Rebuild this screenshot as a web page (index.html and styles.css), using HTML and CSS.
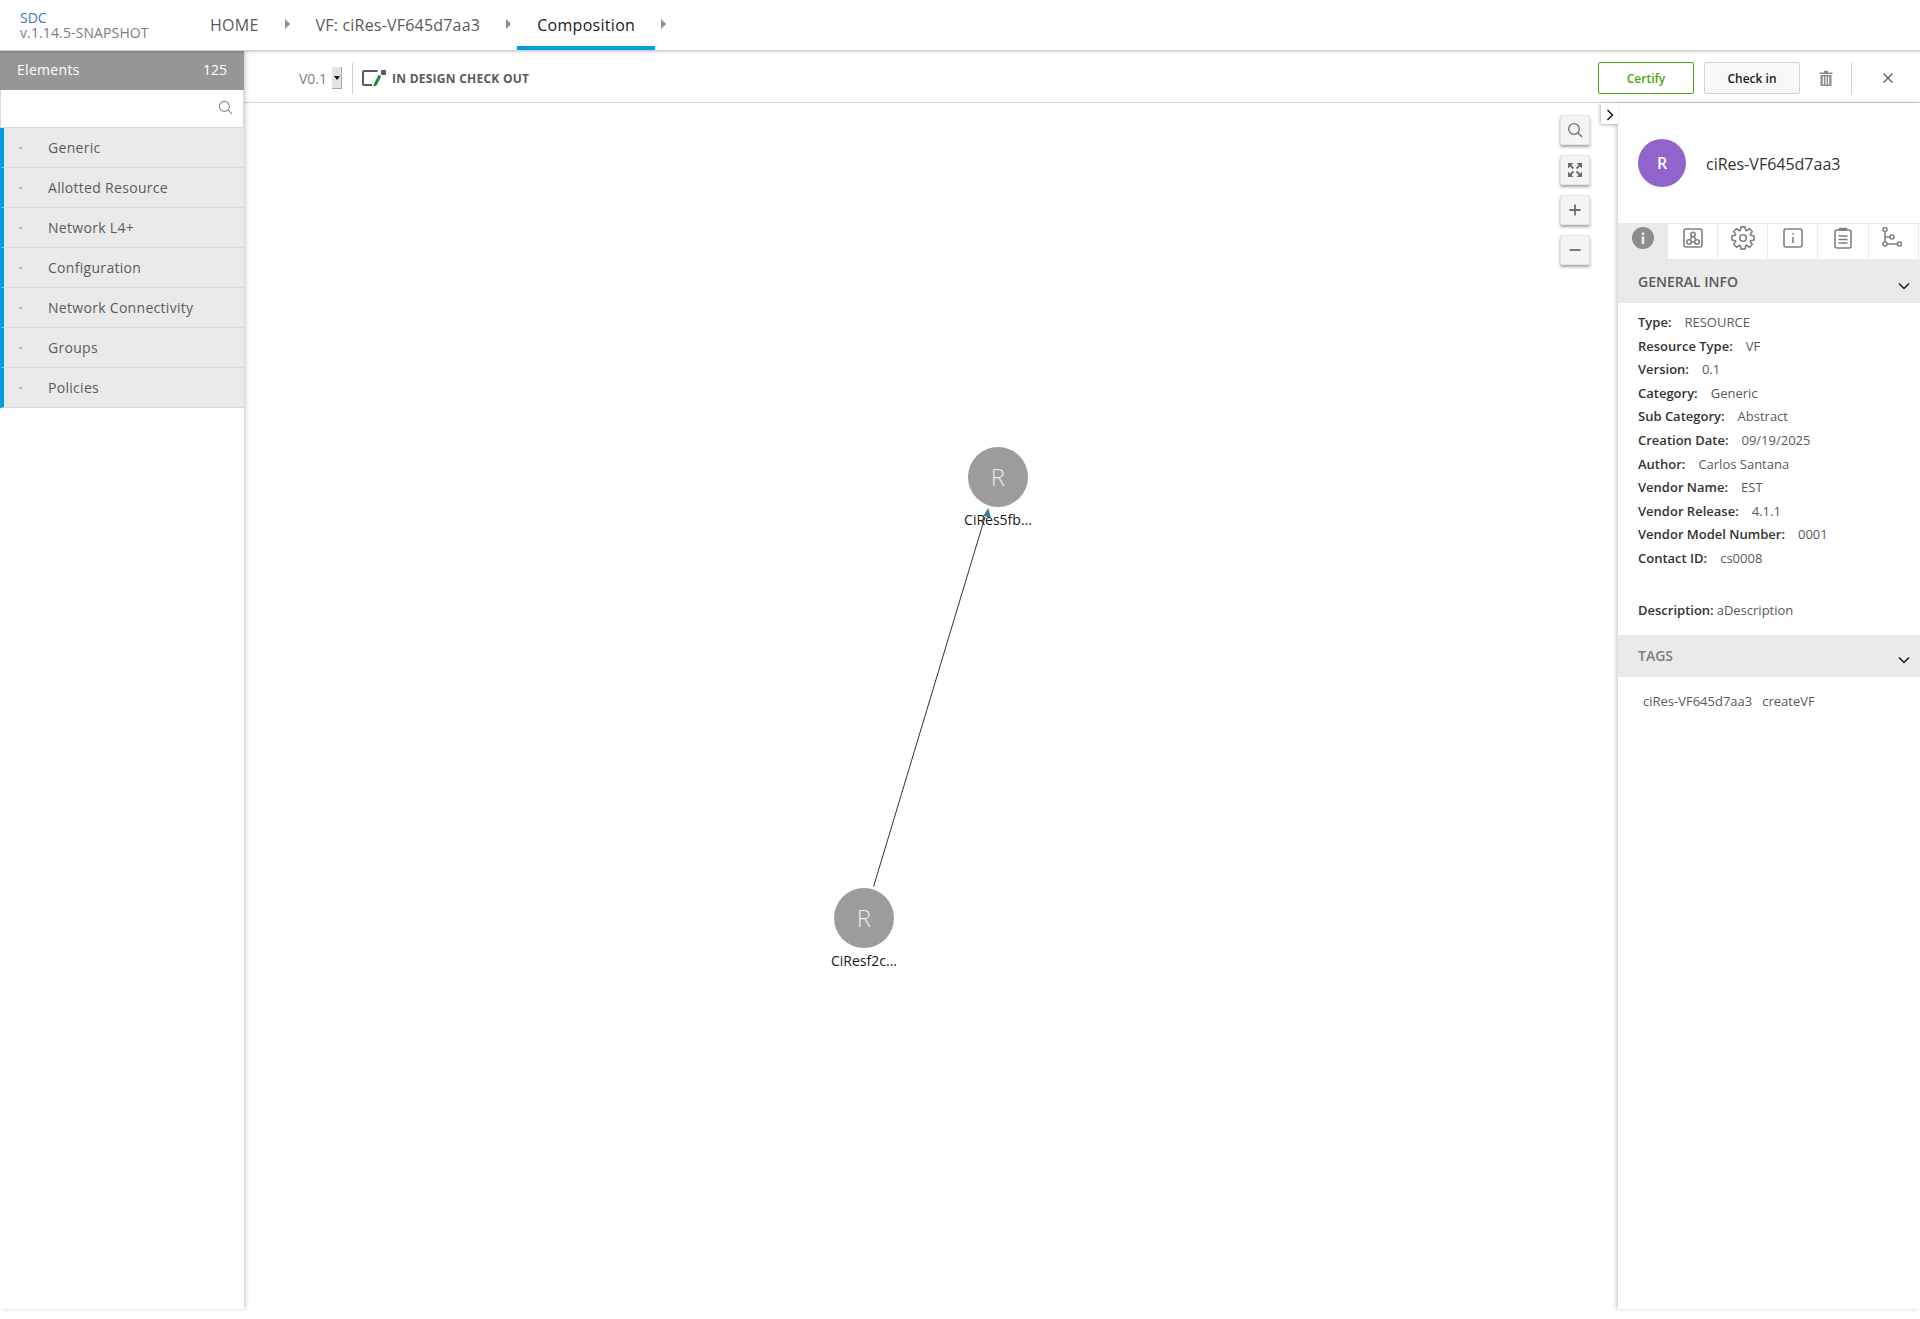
FILE: index.html
```html
<!DOCTYPE html>
<html lang="en">
<head>
<meta charset="utf-8">
<title>SDC Composition</title>
<link rel="stylesheet" href="styles.css">
</head>
<body>
<header class="topbar">
  <div class="brand"><div class="brand-name">SDC</div><div class="brand-version">v.1.14.5-SNAPSHOT</div></div>
  <nav class="crumbs">
    <a class="crumb crumb-home">HOME</a><i class="crumb-arrow"></i>
    <a class="crumb crumb-vf">VF: ciRes-VF645d7aa3</a><i class="crumb-arrow"></i>
    <a class="crumb crumb-active">Composition</a><i class="crumb-arrow"></i>
  </nav>
</header>
<div class="main">
  <aside class="palette">
    <div class="palette-head"><span class="palette-title">Elements</span><span>125</span></div>
    <div class="palette-search">
      <svg class="ico-search" viewBox="0 0 16 16"><circle cx="6.800" cy="6.800" r="5.300"/><path d="M10.800 10.800l4.200 4.200"/></svg>
    </div>
    <ul class="groups">
      <li class="group"><i class="group-chev"></i>Generic</li>
      <li class="group"><i class="group-chev"></i>Allotted Resource</li>
      <li class="group"><i class="group-chev"></i>Network L4+</li>
      <li class="group"><i class="group-chev"></i>Configuration</li>
      <li class="group"><i class="group-chev"></i>Network Connectivity</li>
      <li class="group"><i class="group-chev"></i>Groups</li>
      <li class="group"><i class="group-chev"></i>Policies</li>
    </ul>
  </aside>
  <div class="work">
    <div class="toolbar">
      <div class="version"><span>V0.1</span><span class="ver-select"><i></i></span></div>
      <div class="status">
        <svg class="ico-status" viewBox="0 0 24 16"><path class="st-box" d="M15.500 1H2a1 1 0 0 0-1 1v12a1 1 0 0 0 1 1h8"/><path class="st-pen" d="M12.500 16L18 5.500"/><rect class="st-dot" x="19" y="0" width="5" height="5" rx="1"/></svg>
        <span>IN DESIGN CHECK OUT</span>
      </div>
      <div class="actions">
        <button class="btn btn-certify">Certify</button>
        <button class="btn btn-checkin">Check in</button>
        <svg class="ico-trash" viewBox="0 0 14 16"><path d="M0.500 2.500h13v1.500h-13zM5 2.500V0.800h4v1.700z"/><path d="M1.500 5h11v10a1 1 0 0 1-1 1h-9a1 1 0 0 1-1-1zM3.700 6.500v8h1.200v-8zM6.400 6.500v8h1.200v-8zM9.100 6.500v8h1.200v-8z" fill-rule="evenodd"/></svg>
        <i class="act-div"></i>
        <svg class="ico-close" viewBox="0 0 12 12"><path d="M1.500 1.500l9 9M10.500 1.500l-9 9"/></svg>
      </div>
    </div>
    <div class="stage">
      <section class="canvas">
        <svg class="links" viewBox="0 0 1374 1206">
          <path class="link" d="M629.600 783.500L741 414"/>
          <path class="link-arrow" d="M744.300 405L746.800 414.500L739.200 413Z"/>
        </svg>
        <div class="node node-a"><div class="node-circle">R</div><div class="node-label">CiRes5fb...</div></div>
        <div class="node node-b"><div class="node-circle">R</div><div class="node-label">CiResf2c...</div></div>
        <div class="zooms">
          <button class="zoom"><svg viewBox="0 0 16 16"><circle cx="7" cy="7" r="5.300"/><path d="M11 11l4 4"/></svg></button>
          <button class="zoom"><svg viewBox="0 0 16 16"><path class="fit" d="M1 1h5.500L1 6.500zM15 1v5.500L9.500 1zM1 15v-5.500L6.500 15zM15 15H9.500L15 9.500z"/><path class="fit-line" d="M3 3l3.500 3.500M13 3L9.500 6.500M3 13l3.500-3.500M13 13L9.500 9.500"/></svg></button>
          <button class="zoom"><svg viewBox="0 0 16 16"><path class="thick" d="M8 2.500v11M2.500 8h11"/></svg></button>
          <button class="zoom"><svg viewBox="0 0 16 16"><path class="thick" d="M2.500 8h11"/></svg></button>
        </div>
      </section>
      <aside class="panel">
        <button class="panel-toggle"><svg viewBox="0 0 8 12"><path d="M1.500 1l5 5-5 5"/></svg></button>
        <div class="panel-title"><div class="avatar">R</div><div class="panel-name">ciRes-VF645d7aa3</div></div>
        <div class="tabs">
          <div class="tab tab-on"><svg class="ic-22" viewBox="0 0 22 22"><circle class="i-fill" cx="11" cy="11" r="11"/><rect class="i-knock" x="9.700" y="9.500" width="2.600" height="7.500"/><rect class="i-knock" x="9.700" y="5.500" width="2.600" height="2.600"/></svg></div>
          <div class="tab"><svg class="ic-20" viewBox="0 0 20 20"><rect x="1" y="1" width="18" height="18" rx="2"/><circle cx="10" cy="6.500" r="2.200"/><circle cx="6" cy="14" r="2.200"/><circle cx="14" cy="14" r="2.200"/><path d="M9 8.500l-2 3.500M11 8.500l2 3.500M8.200 14h3.600"/></svg></div>
          <div class="tab"><svg class="ic-24" viewBox="0 0 24 24"><circle cx="12" cy="12" r="3.300"/><path transform="translate(12 12)" d="M-2.740-7.520L-1.960-11.130L1.960-11.130L2.740-7.520L3.380-7.250L6.480-9.260L9.260-6.480L7.250-3.380L7.520-2.740L11.130-1.960L11.130 1.960L7.520 2.740L7.250 3.380L9.260 6.480L6.480 9.260L3.380 7.250L2.740 7.520L1.960 11.130L-1.960 11.130L-2.740 7.520L-3.380 7.250L-6.480 9.260L-9.260 6.480L-7.250 3.380L-7.520 2.740L-11.130 1.960L-11.130-1.960L-7.520-2.740L-7.250-3.380L-9.260-6.480L-6.480-9.260L-3.380-7.250Z"/></svg></div>
          <div class="tab"><svg class="ic-20" viewBox="0 0 20 20"><rect x="1" y="1" width="18" height="18" rx="2"/><path d="M10 9v6M10 5v1.600"/></svg></div>
          <div class="tab tab-clip"><svg class="ic-clip" viewBox="0 0 18 22"><rect x="1" y="3" width="16" height="18" rx="2"/><path d="M5.500 3V1.500h7V3zM4.500 9h9M4.500 12.500h9M4.500 16h9"/></svg></div>
          <div class="tab tab-branch"><svg class="ic-20" viewBox="0 0 20 20"><circle cx="3" cy="2.500" r="2"/><circle cx="3" cy="17" r="2"/><circle cx="10" cy="10" r="2"/><circle cx="17.500" cy="17" r="2"/><path d="M3 4.500v10.500M5 17h10.500M3 10h5"/></svg></div>
        </div>
        <div class="section-head section-general"><span>GENERAL INFO</span><svg class="chev" viewBox="0 0 12 8"><path d="M1 1.500l5 5 5-5"/></svg></div>
        <dl class="info">
          <div class="row"><dt>Type:</dt><dd>RESOURCE</dd></div>
          <div class="row"><dt>Resource Type:</dt><dd>VF</dd></div>
          <div class="row"><dt>Version:</dt><dd>0.1</dd></div>
          <div class="row"><dt>Category:</dt><dd>Generic</dd></div>
          <div class="row"><dt>Sub Category:</dt><dd>Abstract</dd></div>
          <div class="row"><dt>Creation Date:</dt><dd>09/19/2025</dd></div>
          <div class="row"><dt>Author:</dt><dd>Carlos Santana</dd></div>
          <div class="row"><dt>Vendor Name:</dt><dd>EST</dd></div>
          <div class="row"><dt>Vendor Release:</dt><dd>4.1.1</dd></div>
          <div class="row"><dt>Vendor Model Number:</dt><dd>0001</dd></div>
          <div class="row"><dt>Contact ID:</dt><dd>cs0008</dd></div>
          <div class="row row-desc"><dt>Description:</dt><dd>aDescription</dd></div>
        </dl>
        <div class="section-head section-tags"><span>TAGS</span><svg class="chev" viewBox="0 0 12 8"><path d="M1 1.500l5 5 5-5"/></svg></div>
        <div class="tags"><span>ciRes-VF645d7aa3</span><span>createVF</span></div>
      </aside>
    </div>
  </div>
</div>
</body>
</html>
```
FILE: styles.css
```css
* { box-sizing: border-box; }
html, body { margin: 0; height: 100%; }
body {
  font-family: "Open Sans", "Liberation Sans", sans-serif;
  background: #fff;
  color: #5a5a5a;
  height: 1319px;
  overflow: hidden;
  display: flex;
  flex-direction: column;
}
svg { display: block; }
button { font-family: inherit; }

.topbar {
  height: 51px;
  flex: none;
  display: flex;
  background: #fff;
  border-bottom: 1px solid #d2d2d2;
  box-shadow: 0 1px 2px rgba(0,0,0,.18);
  position: relative;
  z-index: 3;
}
.brand { width: 193px; padding: 10px 0 0 20px; font-size: 14px; line-height: 15px; }
.brand-name { color: #3b7ab5; }
.brand-version { color: #7d7d7d; letter-spacing: .12px; }
.crumbs { display: flex; align-items: stretch; }
.crumb { font-size: 16px; line-height: 51px; color: #5a5a5a; display: block; height: 50px; }
.crumb-home { margin-left: 17px; letter-spacing: .25px; }
.crumb-vf { margin-left: 26px; letter-spacing: .2px; }
.crumb-active {
  color: #191919;
  margin-left: 6px;
  padding: 0 20px;
  border-bottom: 4px solid #009fdb;
  letter-spacing: .3px;
}
.crumb-arrow {
  width: 0; height: 0;
  margin: 19px 0 0 26px;
  border-left: 5px solid #8c8c8c;
  border-top: 5px solid transparent;
  border-bottom: 5px solid transparent;
}
.crumb-active + .crumb-arrow { margin-left: 6px; }

.main { flex: none; height: 1258px; display: flex; }

.palette {
  width: 244px;
  flex: none;
  height: 100%;
  box-shadow: 2px 0 4px rgba(0,0,0,.18);
  position: relative;
  z-index: 2;
  background: #fff;
}
.palette-head {
  height: 40px;
  margin-top: -1px;
  padding: 0 17px 2px;
  background: #969696;
  color: #fff;
  font-size: 14px;
  display: flex;
  justify-content: space-between;
  align-items: center;
}
.palette-title { letter-spacing: .3px; }
.palette-search {
  height: 38px;
  border: 1px solid #d8d8d8;
  border-top: 1px solid #fff;
  display: flex;
  justify-content: flex-end;
  align-items: center;
  padding: 0 10px 3px 0;
}
.ico-search { width: 15px; height: 15px; fill: none; stroke: #8c8c8c; stroke-width: 1.200; }
.groups { list-style: none; margin: 0; padding: 0; }
.group {
  height: 40px;
  background: #eaeaea;
  border-left: 4px solid #009fdb;
  border-bottom: 1px solid #d8d8d8;
  font-size: 14px;
  letter-spacing: .3px;
  color: #5a5a5a;
  display: flex;
  align-items: center;
  padding-left: 15px;
}
.group-chev {
  width: 3px; height: 3px;
  margin-right: 26px;
  border-right: 1px solid #a0a0a0;
  border-bottom: 1px solid #a0a0a0;
  transform: rotate(45deg);
}

.work { flex: 1; min-width: 0; display: flex; flex-direction: column; }
.toolbar {
  height: 52px;
  flex: none;
  display: flex;
  align-items: center;
  border-bottom: 1px solid #d2d2d2;
  padding: 3px 0 0 55px;
}
.version { display: flex; align-items: center; font-size: 14px; color: #7d7d7d; height: 31px; padding-right: 10px; border-right: 1px solid #d2d2d2; }
.ver-select {
  width: 10px; height: 22px;
  margin-left: 5px;
  background: #e3e3e3;
  border-right: 1px solid #a8a8a8;
  border-bottom: 1px solid #a8a8a8;
  display: flex; align-items: center; justify-content: center;
}
.ver-select i { width: 0; height: 0; border-top: 4px solid #111; border-left: 3px solid transparent; border-right: 3px solid transparent; }
.status { display: flex; align-items: center; margin-left: 9px; font-size: 12px; font-weight: 700; letter-spacing: .25px; color: #5a5a5a; }
.ico-status { width: 24px; height: 16px; margin-right: 6px; }
.st-box { fill: none; stroke: #5a5a5a; stroke-width: 2; }
.st-pen { fill: none; stroke: #1a8a3e; stroke-width: 3; }
.st-dot { fill: #5a5a5a; }
.actions { margin-left: auto; display: flex; align-items: center; padding-right: 26px; }
.btn { width: 96px; height: 32px; border-radius: 2px; font-size: 12px; font-weight: 600; padding: 0; }
.btn-certify { background: #fff; border: 1px solid #4ca90c; color: #4ca90c; }
.btn-checkin { background: #f8f8f8; border: 1px solid #d2d2d2; color: #191919; margin-left: 10px; }
.ico-trash { width: 14px; height: 16px; margin-left: 19px; fill: #8c8c8c; }
.act-div { width: 1px; height: 32px; background: #d2d2d2; margin-left: 18px; }
.ico-close { width: 12px; height: 12px; margin-left: 30px; fill: none; stroke: #5a5a5a; stroke-width: 1.300; }

.stage { flex: 1; display: flex; min-height: 0; }
.canvas { flex: 1; position: relative; min-width: 0; }
.links { position: absolute; left: 0; top: 0; width: 1374px; height: 1206px; }
.link { stroke: #333; stroke-width: 1; fill: none; }
.link-arrow { fill: #2f7f9f; }
.node { position: absolute; width: 80px; text-align: center; }
.node-a { left: 714px; top: 344px; }
.node-b { left: 580px; top: 785px; }
.node-circle {
  width: 60px; height: 60px;
  margin: 0 auto;
  border-radius: 50%;
  background: #9c9c9c;
  color: #ececec;
  font-size: 24px;
  font-weight: 300;
  line-height: 60px;
}
.node-label { font-size: 14px; line-height: 20px; color: #191919; margin-top: 3px; white-space: nowrap; position: relative; }
.zooms { position: absolute; right: 28px; top: 12px; display: flex; flex-direction: column; gap: 10px; }
.zoom {
  width: 30px; height: 30px;
  padding: 0;
  background: #f5f5f5;
  border: 1px solid #e3e3e3;
  border-radius: 2px;
  box-shadow: 0 2px 3px rgba(0,0,0,.35);
  display: flex; align-items: center; justify-content: center;
}
.zoom svg { width: 16px; height: 16px; fill: none; stroke: #6e6e6e; stroke-width: 1.300; }
.zoom .fit { fill: #6e6e6e; stroke: none; }
.zoom .fit-line { stroke-width: 1.800; }
.zoom .thick { stroke-width: 1.800; }

.panel {
  width: 302px;
  flex: none;
  height: 1206px;
  position: relative;
  background: #fff;
  box-shadow: -2px 0 4px rgba(0,0,0,.18);
  z-index: 1;
}
.panel-toggle {
  position: absolute;
  left: -17px; top: 0;
  width: 17px; height: 21px;
  padding: 2px 0 0 1px;
  background: #fff;
  border: 0;
  box-shadow: -1px 1px 3px rgba(0,0,0,.3);
  display: flex; align-items: center; justify-content: center;
}
.panel-toggle svg { width: 8px; height: 12px; fill: none; stroke: #191919; stroke-width: 1.500; }
.panel-title { height: 120px; display: flex; align-items: center; padding: 0 0 0 20px; }
.avatar { width: 48px; height: 48px; border-radius: 50%; background: #9063cd; color: #fff; text-align: center; line-height: 48px; font-size: 16px; font-weight: 600; }
.panel-name { font-size: 16px; color: #333; margin-left: 20px; padding-top: 2px; }
.tabs { display: flex; height: 38px; border-top: 1px solid #eaeaea; border-bottom: 2px solid #eaeaea; }
.tab { width: 50px; flex: none; display: flex; justify-content: center; align-items: center; padding-bottom: 7px; border-right: 1px solid #eaeaea; }
.tab svg { fill: none; stroke: #808080; stroke-width: 1.600; stroke-linejoin: round; }
.tab-on { background: #eaeaea; }
.tab-clip { width: 51px; }
.tab-branch { padding: 0 3px 10px 0; }
.ic-22 { width: 22px; height: 22px; }
.ic-20 { width: 20px; height: 20px; }
.ic-24 { width: 24px; height: 24px; }
.ic-clip { width: 18px; height: 22px; }
.tab .i-fill { fill: #8c8c8c; stroke: none; }
.tab .i-knock { fill: #eaeaea; stroke: none; }
.section-head {
  height: 42px;
  background: #eaeaea;
  color: #5a5a5a;
  font-size: 14px;
  font-weight: 600;
  padding: 0 0 2px 20px;
  display: flex;
  align-items: center;
  justify-content: space-between;
}
.section-tags { color: #7d7d7d; }
.chev { width: 12px; height: 8px; margin: 10px 10px 0 0; fill: none; stroke: #191919; stroke-width: 1.500; }
.info { margin: 0; padding: 8px 0 0 20px; font-size: 13px; height: 332px; }
.row { display: flex; height: 23.6px; line-height: 23.6px; }
.row dt { font-weight: 600; color: #333; }
.row dd { margin: 0 0 0 13px; color: #5a5a5a; }
.row-desc { margin-top: 28px; }
.row-desc dd { margin-left: 3px; }
.tags { padding: 15px 0 0 25px; font-size: 13px; color: #5a5a5a; display: flex; gap: 10px; }
```
